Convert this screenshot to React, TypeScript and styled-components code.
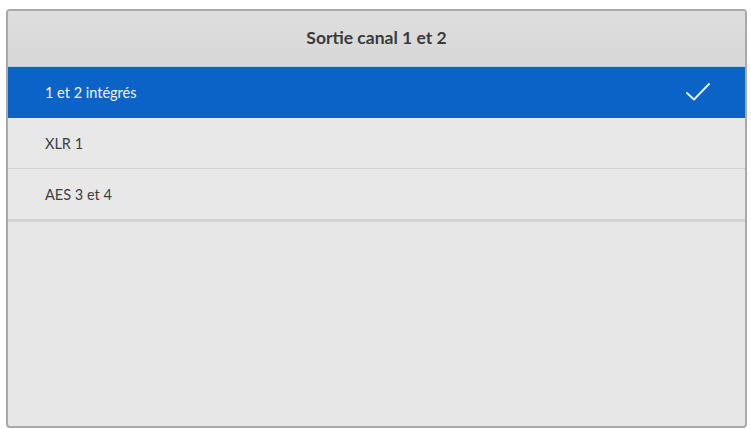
import React from 'react'
import styled, { createGlobalStyle } from 'styled-components'

const GlobalStyle = createGlobalStyle`
  html, body {
    margin: 0;
    padding: 0;
    background: #ffffff;
    font-family: Lato, 'Open Sans', sans-serif;
  }
`

const Page = styled.div`
  width: 751px;
  height: 429px;
  padding: 9px 4px 1px 6px;
  box-sizing: border-box;
  background: #ffffff;
`

const Panel = styled.div`
  height: 100%;
  display: flex;
  flex-direction: column;
  border: 2px solid #a9a9a9;
  border-radius: 4px;
  background: #e7e7e7;
  overflow: hidden;
  box-sizing: border-box;
`

const Header = styled.div`
  height: 56px;
  display: flex;
  align-items: center;
  justify-content: center;
  background: linear-gradient(#dedede, #d7d7d7);
  border-bottom: 1px solid #b9cde0;
  font-size: 17.5px;
  font-weight: 700;
  color: #3a3a3a;
  padding-bottom: 2px;
  box-sizing: border-box;
`

const List = styled.div`
  display: flex;
  flex-direction: column;
  border-bottom: 2px solid #d4d4d4;
`

const Row = styled.div<{ $selected?: boolean }>`
  height: 51px;
  display: flex;
  align-items: center;
  justify-content: space-between;
  padding: 0 34px 0 37px;
  box-sizing: border-box;
  font-size: 14.5px;
  color: ${(p) => (p.$selected ? '#f2f7ff' : '#3e3e3e')};
  background: ${(p) => (p.$selected ? '#0b63c8' : '#e8e8e8')};
  border-bottom: 1px solid ${(p) => (p.$selected ? '#2b5f9c' : '#d2d2d2')};
`

const Check = () => (
  <svg width="26" height="20" viewBox="0 0 26 20" fill="none">
    <path d="M2 11 L9 17.5 L24 2" stroke="#dceeff" strokeWidth="2" strokeLinecap="round" strokeLinejoin="round" />
  </svg>
)

const options = ['1 et 2 intégrés', 'XLR 1', 'AES 3 et 4']

export default function App() {
  return (
    <Page>
      <GlobalStyle />
      <Panel>
        <Header>Sortie canal 1 et 2</Header>
        <List>
          {options.map((o, i) => (
            <Row key={o} $selected={i === 0}>
              <span>{o}</span>
              {i === 0 && <Check />}
            </Row>
          ))}
        </List>
      </Panel>
    </Page>
  )
}
